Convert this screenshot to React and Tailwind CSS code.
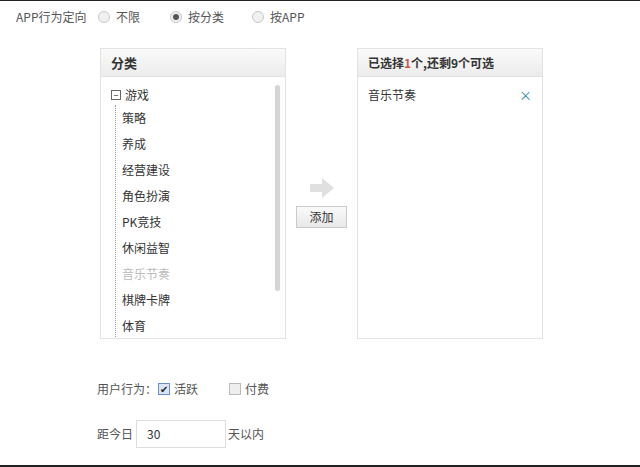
const F = { fontFamily: '"Noto Sans CJK SC", "Liberation Sans", sans-serif' };
const items = ['策略', '养成', '经营建设', '角色扮演', 'PK竞技', '休闲益智', '音乐节奏', '棋牌卡牌', '体育'];

function Radio({ checked, label }) {
  return (
    <div className="flex items-center gap-1.5">
      <span className="w-3 h-3 rounded-full border border-[#c8c8c8] bg-[#f0f0f0] flex items-center justify-center">
        {checked && <span className="w-1.5 h-1.5 rounded-full bg-[#555]" />}
      </span>
      <span>{label}</span>
    </div>
  );
}

export default function App() {
  return (
    <div style={F} className="w-[640px] h-[467px] bg-white border-t border-b-2 border-[#222] text-[12px] text-[#333] relative overflow-hidden">
      <div className="flex items-center h-[32px] pl-[16px] text-[#555]">
        <span className="w-[82px]">APP行为定向</span>
        <div className="w-[72px]"><Radio label="不限" /></div>
        <div className="w-[82px]"><Radio checked label="按分类" /></div>
        <Radio label="按APP" />
      </div>
      <div className="flex mt-[15px] ml-[100px]">
        <div className="w-[186px] h-[291px] border border-[#e3e3e3] flex flex-col">
          <div className="h-[28px] flex items-center pl-[10px] font-bold text-[13px] bg-gradient-to-b from-[#fafafa] to-[#ececec] border-b border-[#e3e3e3]">分类</div>
          <div className="flex flex-1 overflow-hidden">
            <div className="flex-1 pl-[10px] pt-[8px]">
              <div className="flex items-center gap-1 h-[20px]">
                <span className="w-[10px] h-[10px] border border-[#666] flex items-center justify-center text-[9px] leading-none">−</span>
                <span>游戏</span>
              </div>
              <div className="ml-[4px] border-l border-dotted border-[#999] pl-[6px]">
                {items.map((t) => (
                  <div key={t} className={`h-[26px] flex items-center ${t === '音乐节奏' ? 'text-[#bbb]' : ''}`}>{t}</div>
                ))}
              </div>
            </div>
            <div className="w-[5px] mr-[5px] mt-[8px] h-[206px] rounded bg-[#d5d5d5]" />
          </div>
        </div>
        <div className="w-[71px] flex flex-col items-center pt-[130px]">
          <svg width="24" height="20" viewBox="0 0 24 20" className="mb-[8px]">
            <path d="M0 6h12V0l12 10-12 10v-6H0z" fill="#e0e0e0" />
          </svg>
          <button className="w-[51px] h-[22px] border border-[#ccc] bg-gradient-to-b from-[#fafafa] to-[#e8e8e8] text-[12px]">添加</button>
        </div>
        <div className="w-[186px] h-[291px] border border-[#e3e3e3] flex flex-col">
          <div className="h-[28px] flex items-center pl-[10px] font-bold text-[12px] bg-gradient-to-b from-[#fafafa] to-[#ececec] border-b border-[#e3e3e3]">
            已选择<span className="text-[#c85a4a]">1</span>个,还剩9个可选
          </div>
          <div className="flex justify-between items-center px-[10px] pt-[8px]">
            <span>音乐节奏</span>
            <span className="text-[#2a8aa0] text-[13px]">×</span>
          </div>
        </div>
      </div>
      <div className="ml-[97px] mt-[41px] flex items-center text-[#555]">
        <span className="w-[61px]">用户行为：</span>
        <span className="w-3 h-3 border border-[#6b8fc7] bg-[#dbe6f5] flex items-center justify-center text-[10px] leading-none text-[#222] mr-1">✔</span>
        <span className="w-[55px]">活跃</span>
        <span className="w-3 h-3 border border-[#bbb] bg-[#eee] mr-1" />
        <span>付费</span>
      </div>
      <div className="ml-[97px] mt-[22px] flex items-center text-[#555]">
        <span className="w-[39px]">距今日</span>
        <div className="w-[90px] h-[28px] border border-[#ddd] flex items-center pl-[10px] text-[#333]">30</div>
        <span className="ml-[2px]">天以内</span>
      </div>
    </div>
  );
}
